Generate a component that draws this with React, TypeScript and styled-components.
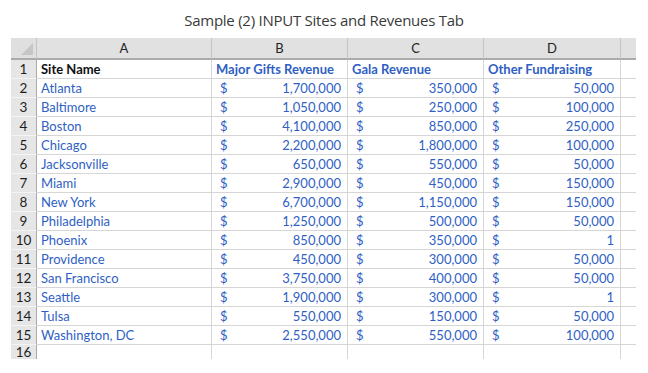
import React from 'react';
import styled, { createGlobalStyle } from 'styled-components';

const GlobalStyle = createGlobalStyle`
  html, body {
    margin: 0;
    padding: 0;
    background: #ffffff;
  }
`;

const Page = styled.div`
  width: 648px;
  height: 373px;
  overflow: hidden;
  background: #fff;
`;

const Title = styled.div`
  height: 38px;
  box-sizing: border-box;
  padding-top: 10px;
  text-align: center;
  font-family: 'Open Sans', sans-serif;
  font-size: 15px;
  color: #3a3a3a;
  letter-spacing: -0.25px;
`;

const Sheet = styled.div`
  margin-left: 11px;
  width: 625px;
  height: 321px;
  overflow: hidden;
  display: grid;
  grid-template-columns: 26px 175px 136px 136px 137px 15px;
  grid-template-rows: 22px;
  grid-auto-rows: 19px;
  font-family: Lato, 'Liberation Sans', sans-serif;
  font-size: 13px;
`;

const Corner = styled.div`
  position: relative;
  background: #dfdfdf;
  border-right: 1px solid #c4c4c4;
  border-bottom: 2px solid #ababab;
  box-sizing: border-box;

  &::after {
    content: '';
    position: absolute;
    right: 3px;
    bottom: 3px;
    border-style: solid;
    border-width: 0 0 12px 12px;
    border-color: transparent transparent #c5c5c5 transparent;
  }
`;

const ColHead = styled.div`
  display: flex;
  align-items: center;
  justify-content: center;
  background: #e1e1e1;
  color: #222;
  border-right: 1px solid #c4c4c4;
  border-bottom: 2px solid #ababab;
  box-sizing: border-box;
  font-size: 13px;
`;

const RowHead = styled.div<{ $partial?: boolean }>`
  display: flex;
  align-items: ${({ $partial }) => ($partial ? 'flex-start' : 'center')};
  justify-content: center;
  background: #e6e6e6;
  color: #1e1e1e;
  border-right: 1px solid #a9a9a9;
  border-bottom: 1px solid #f4f4f4;
  box-sizing: border-box;
  font-size: 13.5px;
  line-height: ${({ $partial }) => ($partial ? '14px' : 'normal')};
`;

const Cell = styled.div<{ $bold?: boolean; $black?: boolean }>`
  display: flex;
  align-items: center;
  padding: 0 4px;
  color: ${({ $black }) => ($black ? '#111' : '#2f5fc4')};
  font-weight: ${({ $bold }) => ($bold ? 700 : 400)};
  border-right: 1px solid #d6d6d6;
  border-bottom: 1px solid #d6d6d6;
  box-sizing: border-box;
  white-space: nowrap;
  overflow: visible;
`;

const MoneyCell = styled(Cell)`
  justify-content: space-between;
  padding: 0 6px 0 8px;
`;

const Spare = styled.div<{ $head?: boolean }>`
  background: ${({ $head }) => ($head ? '#e1e1e1' : '#fff')};
  border-bottom: ${({ $head }) => ($head ? '2px solid #ababab' : '1px solid #d6d6d6')};
  box-sizing: border-box;
`;

type Site = [string, string, string, string];

const sites: Site[] = [
  ['Atlanta', '1,700,000', '350,000', '50,000'],
  ['Baltimore', '1,050,000', '250,000', '100,000'],
  ['Boston', '4,100,000', '850,000', '250,000'],
  ['Chicago', '2,200,000', '1,800,000', '100,000'],
  ['Jacksonville', '650,000', '550,000', '50,000'],
  ['Miami', '2,900,000', '450,000', '150,000'],
  ['New York', '6,700,000', '1,150,000', '150,000'],
  ['Philadelphia', '1,250,000', '500,000', '50,000'],
  ['Phoenix', '850,000', '350,000', '1'],
  ['Providence', '450,000', '300,000', '50,000'],
  ['San Francisco', '3,750,000', '400,000', '50,000'],
  ['Seattle', '1,900,000', '300,000', '1'],
  ['Tulsa', '550,000', '150,000', '50,000'],
  ['Washington, DC', '2,550,000', '550,000', '100,000'],
];

const Money = ({ value }: { value: string }) => (
  <MoneyCell>
    <span>$</span>
    <span>{value}</span>
  </MoneyCell>
);

export default function App() {
  return (
    <Page>
      <GlobalStyle />
      <Title>Sample (2) INPUT Sites and Revenues Tab</Title>
      <Sheet>
        <Corner />
        <ColHead>A</ColHead>
        <ColHead>B</ColHead>
        <ColHead>C</ColHead>
        <ColHead>D</ColHead>
        <Spare $head />

        <RowHead>1</RowHead>
        <Cell $bold $black>Site Name</Cell>
        <Cell $bold>Major Gifts Revenue</Cell>
        <Cell $bold>Gala Revenue</Cell>
        <Cell $bold>Other Fundraising</Cell>
        <Spare />

        {sites.map(([name, major, gala, other], i) => (
          <React.Fragment key={name}>
            <RowHead>{i + 2}</RowHead>
            <Cell>{name}</Cell>
            <Money value={major} />
            <Money value={gala} />
            <Money value={other} />
            <Spare />
          </React.Fragment>
        ))}

        <RowHead $partial>16</RowHead>
        <Cell />
        <Cell />
        <Cell />
        <Cell />
        <Spare />
      </Sheet>
    </Page>
  );
}
